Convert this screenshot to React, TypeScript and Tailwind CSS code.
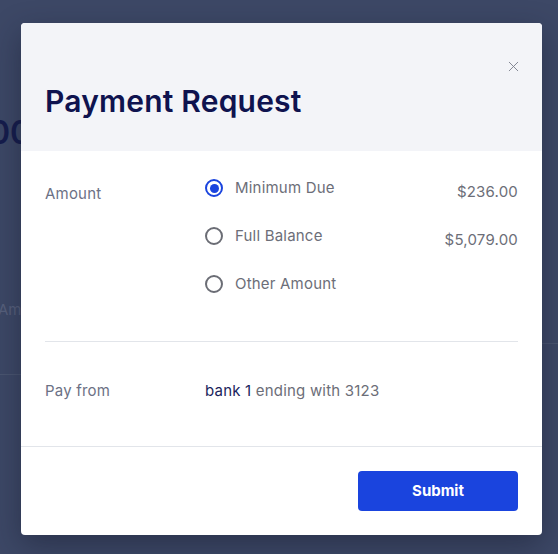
import { X } from 'lucide-react';

const font = { fontFamily: 'Inter, "Open Sans", Arial, sans-serif' };

function Radio({ checked }: { checked?: boolean }) {
  return checked ? (
    <span className="flex h-[18px] w-[18px] items-center justify-center rounded-full border-2 border-[#1a44de]">
      <span className="h-[9px] w-[9px] rounded-full bg-[#1a44de]" />
    </span>
  ) : (
    <span className="h-[18px] w-[18px] rounded-full border-2 border-[#6b6d75]" />
  );
}

const options = [
  { label: 'Minimum Due', value: '$236.00', checked: true },
  { label: 'Full Balance', value: '$5,079.00' },
  { label: 'Other Amount', value: '' },
];

export default function App() {
  return (
    <div className="relative h-[554px] w-[558px] overflow-hidden bg-[#3d4866]" style={font}>
      {/* dimmed page behind the dialog */}
      <div className="flex h-full flex-col">
        <div className="mt-[117px] -ml-[128px] text-[32px] font-semibold leading-none text-[#151c4c]">$5,079.00</div>
        <div className="mt-[150px] flex items-end">
          <div className="-ml-[2px] w-[60px] text-[15px] text-[#57607c]">Amount</div>
          <div className="flex-1" />
        </div>
        <div className="mt-[52px] flex">
          <div className="h-px w-[30px] bg-[#4a5570]" />
        </div>
      </div>
      <div className="absolute top-[343px] right-0 h-px w-[30px] bg-[#4a5570]" />

      {/* overlay + dialog */}
      <div className="absolute inset-0 flex items-start pt-[23px] pl-[21px]">
        <div className="w-[521px] overflow-hidden rounded-[4px] bg-white shadow-[0_10px_30px_rgba(20,25,45,0.45)]">
          <div className="relative h-[128px] bg-[#f3f4f8] px-6">
            <button className="absolute top-[35px] right-[20px] text-[#7b7f8c]">
              <X className="h-[17px] w-[17px]" strokeWidth={1.3} />
            </button>
            <h2 className="pt-[63px] text-[30px] leading-none font-semibold tracking-[0.2px] text-[#0f134f]">
              Payment Request
            </h2>
          </div>

          <div className="px-6">
            <div className="flex pt-[27px] pb-[47px]">
              <div className="w-[160px] pt-[5px] text-[15px] tracking-[0.2px] text-[#6c7185]">Amount</div>
              <div className="flex flex-1 flex-col gap-[24px]">
                {options.map((o) => (
                  <div key={o.label} className="flex items-start">
                    <div className="flex items-center gap-[12px]">
                      <Radio checked={o.checked} />
                      <span className="text-[15px] leading-[20px] tracking-[0.2px] text-[#6c6e78]">{o.label}</span>
                    </div>
                    <span className="ml-auto pt-[4px] text-[15px] leading-[20px] tracking-[0.2px] text-[#6c6e78]">{o.value}</span>
                  </div>
                ))}
              </div>
            </div>
            <div className="h-px bg-[#e2e5ea]" />
            <div className="flex items-center pt-[39px] pb-[45px] text-[15px] leading-[20px] tracking-[0.2px]">
              <div className="w-[160px] text-[#6c7185]">Pay from</div>
              <div className="text-[#6c6e78]">
                <span className="text-[#1b1f5c]">bank 1</span> ending with 3123
              </div>
            </div>
          </div>

          <div className="border-t border-[#e2e5ea] px-6 pt-[24px] pb-[24px]">
            <div className="flex justify-end">
              <button className="h-10 w-[160px] rounded-[4px] bg-[#1a44de] text-[15px] font-bold text-white">
                Submit
              </button>
            </div>
          </div>
        </div>
      </div>
    </div>
  );
}
